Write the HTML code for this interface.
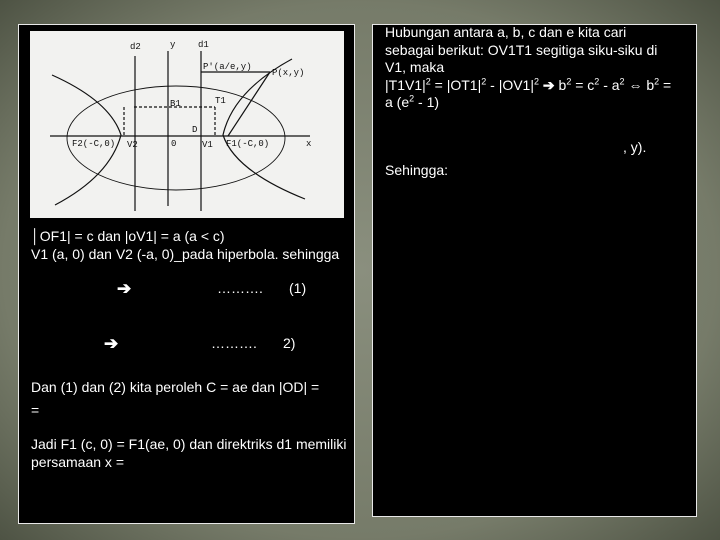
<!DOCTYPE html>
<html><head><style>
body{margin:0;width:720px;height:540px;background:#7b806f;position:relative;overflow:hidden;font-family:"Liberation Sans",sans-serif;color:#fff;font-size:14px;}
.bg{position:absolute;inset:0;background:radial-gradient(ellipse at center,#8a8f7e 0%,#767b69 70%,#4e5344 100%);}
.p{position:absolute;background:#000;border:1px solid #e8e8e8;}
.t{position:absolute;white-space:nowrap;line-height:17px;}
.a{font-size:17px;font-weight:bold;}
sup{font-size:9px;line-height:0;}
</style></head><body>
<div class="bg"></div>
<div class="p" style="left:18px;top:24px;width:335px;height:498px;">
<svg style="position:absolute;left:11px;top:6px" width="314" height="187" viewBox="0 0 314 187">
<rect width="314" height="187" fill="#f2f2f0"/>
<g stroke="#111" fill="none" stroke-width="1.2">
<line x1="20" y1="105" x2="280" y2="105"/>
<line x1="138" y1="175" x2="138" y2="20"/>
<line x1="105" y1="25" x2="105" y2="180"/>
<line x1="171" y1="20" x2="171" y2="180"/>
<ellipse cx="146" cy="107" rx="109" ry="52" stroke-width="0.9"/>
<path d="M22,44 Q80,70 91,104 Q80,145 25,174"/>
<path d="M262,28 Q203,60 193,104 Q205,140 275,168"/>
<line x1="171" y1="41" x2="240" y2="41"/>
<line x1="240" y1="41" x2="198" y2="105"/>
<line x1="104" y1="76" x2="185" y2="76" stroke-dasharray="3,2"/>
<line x1="94" y1="76" x2="94" y2="105" stroke-dasharray="3,2"/>
<line x1="185" y1="76" x2="185" y2="105" stroke-dasharray="3,2"/>
</g>
<g font-size="9" font-family="Liberation Mono,monospace" fill="#111">
<text x="100" y="18">d2</text><text x="140" y="16">y</text><text x="168" y="16">d1</text>
<text x="173" y="38">P'(a/e,y)</text><text x="242" y="44">P(x,y)</text>
<text x="140" y="75">B1</text><text x="185" y="72">T1</text><text x="162" y="101">D</text>
<text x="42" y="115">F2(-C,0)</text><text x="97" y="116">V2</text><text x="141" y="115">0</text>
<text x="172" y="116">V1</text><text x="196" y="115">F1(-C,0)</text><text x="276" y="115">x</text>
</g></svg>
<div class="t" style="left:12px;top:203px;">│OF1| = c dan |oV1| = a (a &lt; c)</div>
<div class="t" style="left:12px;top:221px;">V1 (a, 0) dan V2 (-a, 0)_pada hiperbola. sehingga</div>
<div class="t a" style="left:98px;top:255px;">➔</div>
<div class="t" style="left:198px;top:255px;">……….</div>
<div class="t" style="left:270px;top:255px;">(1)</div>
<div class="t a" style="left:85px;top:310px;">➔</div>
<div class="t" style="left:192px;top:310px;">……….</div>
<div class="t" style="left:264px;top:310px;">2)</div>
<div class="t" style="left:12px;top:354px;">Dan (1) dan (2) kita peroleh C = ae dan |OD| =</div>
<div class="t" style="left:12px;top:377px;">=</div>
<div class="t" style="left:12px;top:411px;">Jadi F1 (c, 0) = F1(ae, 0) dan direktriks d1 memiliki</div>
<div class="t" style="left:12px;top:429px;">persamaan x =</div>
</div>
<div class="p" style="left:372px;top:24px;width:323px;height:491px;">
<div class="t" style="left:12px;top:-1px;">Hubungan antara a, b, c dan e kita cari</div>
<div class="t" style="left:12px;top:16.5px;">sebagai berikut: OV1T1 segitiga siku-siku di</div>
<div class="t" style="left:12px;top:34px;">V1, maka</div>
<div class="t" style="left:12px;top:51.5px;">|T1V1|<sup>2</sup> = |OT1|<sup>2</sup> - |OV1|<sup>2</sup> <b>➔</b> b<sup>2</sup> = c<sup>2</sup> - a<sup>2</sup> ⇔ b<sup>2</sup> =</div>
<div class="t" style="left:12px;top:69px;">a (e<sup>2</sup> - 1)</div>
<div class="t" style="left:250px;top:114px;">, y).</div>
<div class="t" style="left:12px;top:137px;">Sehingga:</div>
</div>
</body></html>
